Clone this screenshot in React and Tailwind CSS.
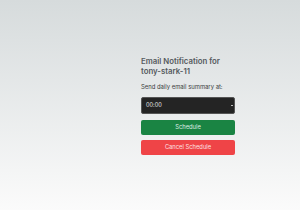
export default function App() {
  return (
    <div
      className="w-[300px] h-[210px] flex items-center bg-gradient-to-b from-[#d6dbdc] to-[#fbfbfb] pl-[141px]"
      style={{ fontFamily: "Inter, 'Noto Sans', sans-serif" }}
    >
      <div className="w-[94px] flex flex-col">
        <h1 className="text-[7.8px] leading-[10.5px] font-semibold text-[#555a5e]">
          Email Notification for tony-stark-11
        </h1>
        <p className="mt-[6px] text-[5.9px] leading-[8px] text-[#3a3d40]">
          Send daily email summary at:
        </p>
        <div className="mt-[6px] h-[17px] rounded-[2px] bg-[#242424] border border-[#555] flex items-center justify-between pl-[4px] pr-[1px]">
          <span className="text-[5.6px] text-[#e5e5e5]">00:00</span>
          <span className="w-[2px] h-[0.6px] bg-[#bbb]" />
        </div>
        <button className="mt-[6px] h-[15px] rounded-[2px] bg-[#1a8443] text-[5.8px] text-[#dfeee3] flex items-center justify-center">
          Schedule
        </button>
        <button className="mt-[5px] h-[15px] rounded-[2px] bg-[#ef4447] text-[5.8px] text-[#fde2e2] flex items-center justify-center">
          Cancel Schedule
        </button>
      </div>
    </div>
  );
}
